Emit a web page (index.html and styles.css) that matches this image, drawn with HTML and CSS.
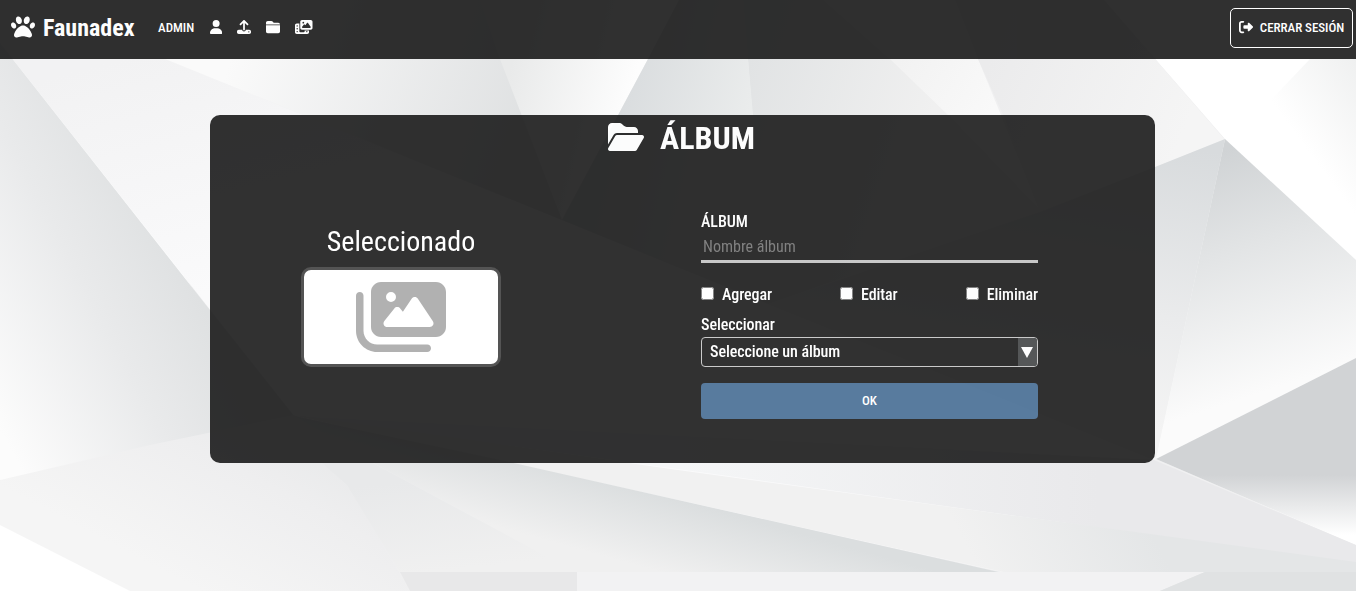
FILE: index.html
```html
<!DOCTYPE html>
<html lang="es">
<head>
<meta charset="utf-8">
<title>Faunadex - Álbum</title>
<link rel="stylesheet" href="styles.css">
</head>
<body>
<svg class="backdrop" viewBox="0 0 1356 591" preserveAspectRatio="none" aria-hidden="true">
  <defs>
    <linearGradient id="left" gradientUnits="userSpaceOnUse" x1="210" y1="320" x2="0" y2="430"><stop offset="0" stop-color="#dfe1e2"/><stop offset=".4" stop-color="#e9eaeb"/><stop offset="1" stop-color="#fcfcfc"/></linearGradient>
    <linearGradient id="a" gradientUnits="userSpaceOnUse" x1="120" y1="60" x2="180" y2="300"><stop offset="0" stop-color="#f2f2f3"/><stop offset="1" stop-color="#fafafb"/></linearGradient>
    <linearGradient id="b" gradientUnits="userSpaceOnUse" x1="230" y1="60" x2="550" y2="170"><stop offset="0" stop-color="#fafafa"/><stop offset="1" stop-color="#dcdedf"/></linearGradient>
    <linearGradient id="c" gradientUnits="userSpaceOnUse" x1="510" y1="70" x2="630" y2="100"><stop offset="0" stop-color="#e9eaea"/><stop offset="1" stop-color="#fdfdfd"/></linearGradient>
    <linearGradient id="d" gradientUnits="userSpaceOnUse" x1="630" y1="80" x2="750" y2="110"><stop offset="0" stop-color="#dadddf"/><stop offset="1" stop-color="#eaecec"/></linearGradient>
    <linearGradient id="e" gradientUnits="userSpaceOnUse" x1="750" y1="60" x2="930" y2="120"><stop offset="0" stop-color="#e1e3e4"/><stop offset="1" stop-color="#f0f0f0"/></linearGradient>
    <linearGradient id="f" gradientUnits="userSpaceOnUse" x1="900" y1="60" x2="990" y2="115"><stop offset="0" stop-color="#f2f2f2"/><stop offset="1" stop-color="#f9f9f9"/></linearGradient>
    <linearGradient id="g" gradientUnits="userSpaceOnUse" x1="990" y1="60" x2="1180" y2="140"><stop offset="0" stop-color="#ebebec"/><stop offset="1" stop-color="#f5f5f5"/></linearGradient>
    <linearGradient id="h" gradientUnits="userSpaceOnUse" x1="1200" y1="150" x2="1150" y2="430"><stop offset="0" stop-color="#d8dbdd"/><stop offset=".6" stop-color="#eaebec"/><stop offset="1" stop-color="#f4f4f4"/></linearGradient>
    <linearGradient id="i" gradientUnits="userSpaceOnUse" x1="1225" y1="150" x2="1300" y2="380"><stop offset="0" stop-color="#d0d3d5"/><stop offset=".4" stop-color="#e2e4e5"/><stop offset="1" stop-color="#fbfbfb"/></linearGradient>
    <linearGradient id="j" gradientUnits="userSpaceOnUse" x1="0" y1="475" x2="0" y2="535"><stop offset="0" stop-color="#d1d3d5"/><stop offset="1" stop-color="#fff"/></linearGradient>
    <linearGradient id="k" gradientUnits="userSpaceOnUse" x1="680" y1="0" x2="1100" y2="0"><stop offset="0" stop-color="#f5f6f7"/><stop offset="1" stop-color="#e9e9eb"/></linearGradient>
    <linearGradient id="l" gradientUnits="userSpaceOnUse" x1="1150" y1="530" x2="1000" y2="610"><stop offset="0" stop-color="#e4e6e7"/><stop offset="1" stop-color="#f1f1f1"/></linearGradient>
    <linearGradient id="m" gradientUnits="userSpaceOnUse" x1="680" y1="500" x2="660" y2="572"><stop offset="0" stop-color="#dbdedf"/><stop offset="1" stop-color="#f0f0f0"/></linearGradient>
    <linearGradient id="n" gradientUnits="userSpaceOnUse" x1="290" y1="420" x2="200" y2="591"><stop offset="0" stop-color="#e8e9ea"/><stop offset=".35" stop-color="#eeeeef"/><stop offset="1" stop-color="#f5f5f5"/></linearGradient>
    <linearGradient id="o" gradientUnits="userSpaceOnUse" x1="420" y1="480" x2="430" y2="572"><stop offset="0" stop-color="#e8e9ea"/><stop offset="1" stop-color="#f0f0f0"/></linearGradient>
    <linearGradient id="p" gradientUnits="userSpaceOnUse" x1="1285" y1="120" x2="1366" y2="60"><stop offset="0" stop-color="#fff"/><stop offset="1" stop-color="#eeefef"/></linearGradient>
  </defs>
  <rect width="1356" height="591" fill="#fff"/>
  <path fill="#f0f0f1" d="M0 0H1104L1225 139 1156 459 1356 545V591H400L294 440z"/>
  <path fill="url(#a)" d="M0 0H20L165 59 1154 460 1003 572 294 416 0 43z"/>
  <path fill="url(#b)" d="M20 0H500L562 220 165 59z"/>
  <path fill="url(#c)" d="M480 0H679L648 59 562 220 500 59z"/>
  <path fill="url(#f)" d="M800 0H955L978 59 1040 210 768 304z"/>
  <path fill="url(#e)" d="M743 0H823L890 59 948 115 1040 210 768 304z"/>
  <path fill="url(#d)" d="M679 0H743L748 59 753 115 768 304 562 220 648 59z"/>
  <path fill="url(#g)" d="M955 0H1104L1155 59 1225 140 1040 212 1003 115 978 59z"/>
  <path fill="url(#p)" d="M1356 59H1310L1250 122 1356 240z"/>
  <path fill="url(#h)" d="M1225 139L1155 167 1040 212 768 304 1156 460z"/>
  <path fill="url(#i)" d="M1225 139L1356 260V358L1156 459z"/>
  <path fill="url(#j)" d="M1156 459L1356 358V545z"/>
  <path fill="url(#k)" d="M294 416L1154 460 1356 545V563z"/>
  <path fill="url(#l)" d="M294 415L678 470 1356 562V591H1003V572z"/>
  <path fill="url(#m)" d="M294 416L505 461 678 500 1003 573H577L373 463z"/>
  <path fill="url(#left)" d="M0 43L202 300 294 416 150 446 0 480z"/>
  <path fill="url(#n)" d="M0 480L150 445 294 415 335 463 410 591H130L0 525z"/>
  <path fill="url(#o)" d="M294 416L373 463 577 573H400L347 485 322 463z"/>
  <path fill="#e8e8e9" d="M400 572H577V591H410z"/>
  <path fill="#f2f2f3" d="M577 572H1205L1160 591H577z"/>
  <path fill="#e0e2e3" d="M1205 572H1356V591H1160z"/>
</svg>

<header class="navbar">
  <a class="brand">
    <svg class="brand-icon" viewBox="0 0 512 512"><path d="M226.5 92.9c14.3 42.9-.3 86.2-32.6 96.8s-70.1-15.6-84.4-58.5s.3-86.2 32.6-96.8s70.1 15.6 84.4 58.5zM100.4 198.6c18.9 32.4 14.3 70.1-10.2 84.1s-59.7-.9-78.5-33.3S-2.7 179.3 21.8 165.3s59.7 .9 78.5 33.3zM69.2 401.2C121.6 259.9 214.7 224 256 224s134.4 35.9 186.8 177.2c3.6 9.7 5.2 20.1 5.2 30.5v1.6c0 25.8-20.9 46.7-46.7 46.7c-11.5 0-22.9-1.4-34-4.2l-88-22c-15.3-3.8-31.3-3.8-46.6 0l-88 22c-11.1 2.8-22.5 4.2-34 4.2C84.9 480 64 459.1 64 433.3v-1.6c0-10.4 1.6-20.8 5.2-30.5zM421.8 282.7c-24.5-14-29.1-51.7-10.2-84.1s54-47.3 78.5-33.3s29.1 51.7 10.2 84.1s-54 47.3-78.5 33.3zM310.1 189.7c-32.3-10.6-46.9-53.9-32.6-96.8s52.1-69.1 84.4-58.5s46.9 53.9 32.6 96.8s-52.1 69.1-84.4 58.5z"/></svg>
    <span class="brand-name">Faunadex</span>
  </a>
  <nav class="menu">
    <span class="role">ADMIN</span>
    <svg class="ico ico-user" viewBox="0 0 448 512"><path d="M224 256A128 128 0 1 0 224 0a128 128 0 1 0 0 256zm-45.7 48C79.8 304 0 383.8 0 482.3C0 498.7 13.3 512 29.7 512H418.3c16.4 0 29.7-13.3 29.7-29.7C448 383.8 368.2 304 269.7 304H178.3z"/></svg>
    <svg class="ico" viewBox="0 0 512 512"><path d="M288 109.3V352c0 17.7-14.3 32-32 32s-32-14.3-32-32V109.3l-73.4 73.4c-12.5 12.5-32.8 12.5-45.3 0s-12.5-32.8 0-45.3l128-128c12.5-12.5 32.8-12.5 45.3 0l128 128c12.5 12.5 12.5 32.8 0 45.3s-32.8 12.5-45.3 0L288 109.3zM64 352H192c0 35.3 28.7 64 64 64s64-28.7 64-64H448c35.3 0 64 28.7 64 64v32c0 35.3-28.7 64-64 64H64c-35.3 0-64-28.7-64-64V416c0-35.3 28.7-64 64-64zM432 456a24 24 0 1 0 0-48 24 24 0 1 0 0 48z"/></svg>
    <svg class="ico" viewBox="0 0 512 512"><path d="M448 480H64c-35.3 0-64-28.7-64-64V192H512V416c0 35.3-28.7 64-64 64zm64-320H0V96C0 60.7 28.7 32 64 32H192c20.1 0 39.1 9.5 51.2 25.6l19.2 25.6c6 8.1 15.5 12.8 25.6 12.8H448c35.3 0 64 28.7 64 64z"/></svg>
    <svg class="ico ico-film" viewBox="0 0 640 512"><path d="M256 0H576c35.3 0 64 28.7 64 64V288c0 35.3-28.7 64-64 64H256c-35.3 0-64-28.7-64-64V64c0-35.3 28.7-64 64-64zM476 106.7C471.5 100 464 96 456 96s-15.5 4-20 10.7l-56 84L362.7 169c-4.6-5.7-11.5-9-18.7-9s-14.2 3.3-18.7 9l-64 80c-5.8 7.2-6.9 17.1-2.9 25.4s12.4 13.6 21.6 13.6h80 48H552c8.9 0 17-4.9 21.2-12.7s3.7-17.3-1.2-24.6l-96-144zM336 96a32 32 0 1 0 -64 0 32 32 0 1 0 64 0zM64 128h96V384v32c0 17.7 14.3 32 32 32H320c17.7 0 32-14.3 32-32V384H512v64c0 35.3-28.7 64-64 64H64c-35.3 0-64-28.7-64-64V192c0-35.3 28.7-64 64-64zm8 64c-8.8 0-16 7.2-16 16v16c0 8.8 7.2 16 16 16H88c8.8 0 16-7.2 16-16V208c0-8.8-7.2-16-16-16H72zm0 104c-8.8 0-16 7.2-16 16v16c0 8.8 7.2 16 16 16H88c8.8 0 16-7.2 16-16V312c0-8.8-7.2-16-16-16H72zm0 104c-8.8 0-16 7.2-16 16v16c0 8.8 7.2 16 16 16H88c8.8 0 16-7.2 16-16V416c0-8.8-7.2-16-16-16H72zm336 16v16c0 8.8 7.2 16 16 16h16c8.8 0 16-7.2 16-16V416c0-8.8-7.2-16-16-16H424c-8.8 0-16 7.2-16 16z"/></svg>
  </nav>
  <button class="logout" type="button">
    <svg class="ico" viewBox="0 0 512 512"><path d="M377.9 105.9L500.7 228.7c7.2 7.2 11.3 17.1 11.3 27.3s-4.1 20.1-11.3 27.3L377.9 406.1c-6.4 6.4-15 9.9-24 9.9c-18.7 0-33.9-15.2-33.9-33.9l0-62.1-128 0c-17.7 0-32-14.3-32-32l0-64c0-17.7 14.3-32 32-32l128 0 0-62.1c0-18.7 15.2-33.9 33.9-33.9c9 0 17.6 3.6 24 9.9zM160 96L96 96c-17.7 0-32 14.3-32 32l0 256c0 17.7 14.3 32 32 32l64 0c17.7 0 32 14.3 32 32s-14.3 32-32 32l-64 0c-53 0-96-43-96-96L0 128C0 75 43 32 96 32l64 0c17.7 0 32 14.3 32 32s-14.3 32-32 32z"/></svg>
    <span>CERRAR SESIÓN</span>
  </button>
</header>

<main class="panel">
  <h1 class="title">
    <svg class="title-icon" viewBox="0 0 576 512"><path d="M88.7 223.8L0 375.8V96C0 60.7 28.7 32 64 32H181.5c17 0 33.3 6.7 45.3 18.7l26.5 26.5c12 12 28.3 18.7 45.3 18.7H416c35.3 0 64 28.7 64 64v32H144c-22.8 0-43.8 12.1-55.3 31.8zm27.6 16.1C122.1 230 132.6 224 144 224H544c11.5 0 22 6.1 27.7 16.1s5.7 22.2-.1 32.1l-112 192C453.9 474 443.4 480 432 480H32c-11.5 0-22-6.1-27.7-16.1s-5.7-22.2 .1-32.1l112-192z"/></svg>
    <span>ÁLBUM</span>
  </h1>
  <section class="selected">
    <h2 class="selected-title">Seleccionado</h2>
    <div class="preview">
      <svg class="preview-icon" viewBox="0 0 576 512"><path d="M160 32c-35.3 0-64 28.7-64 64V320c0 35.3 28.7 64 64 64H512c35.3 0 64-28.7 64-64V96c0-35.3-28.7-64-64-64H160zM396 138.7l96 144c4.9 7.4 5.4 16.8 1.2 24.6S480.9 320 472 320H328 280 200c-9.2 0-17.6-5.3-21.6-13.6s-2.9-18.2 2.9-25.4l64-80c4.6-5.7 11.4-9 18.7-9s14.2 3.3 18.7 9l17.3 21.6 56-84C360.5 132 368 128 376 128s15.5 4 20 10.7zM192 128a32 32 0 1 1 64 0 32 32 0 1 1 -64 0zM48 120c0-13.3-10.7-24-24-24S0 106.7 0 120V344c0 75.1 60.9 136 136 136H456c13.3 0 24-10.7 24-24s-10.7-24-24-24H136c-48.6 0-88-39.4-88-88V120z"/></svg>
    </div>
  </section>
  <form class="form">
    <label class="label" for="name">ÁLBUM</label>
    <input class="name" id="name" type="text" placeholder="Nombre álbum">
    <div class="checks">
      <label class="check"><input class="box" type="checkbox">Agregar</label>
      <label class="check"><input class="box" type="checkbox">Editar</label>
      <label class="check"><input class="box" type="checkbox">Eliminar</label>
    </div>
    <span class="label">Seleccionar</span>
    <div class="select">
      <span class="select-value">Seleccione un álbum</span>
      <span class="select-arrow"><svg class="arrow" viewBox="0 0 12 11"><path d="M0 0H12L6 11z"/></svg></span>
    </div>
    <button class="ok" type="button">OK</button>
  </form>
</main>
</body>
</html>
```
FILE: styles.css
```css
* { box-sizing: border-box; }

body {
  margin: 0;
  height: 591px;
  overflow: hidden;
  color: #fff;
  font-family: "Roboto Condensed", Roboto, sans-serif;
  font-stretch: 75%;
  font-size: 16px;
}

svg { display: block; fill: currentColor; }

.backdrop {
  position: absolute;
  inset: 0;
  z-index: -1;
  width: 100%;
  height: 100%;
}

.navbar {
  display: flex;
  align-items: center;
  height: 59px;
  padding: 0 3px 4px 11px;
  background: #1a1a1a;
  opacity: .9;
}

.brand { display: flex; align-items: center; gap: 8px; width: 147px; }
.brand-icon { width: 24px; height: 24px; margin: -1px 0 1px; }
.brand-name { font-size: 24px; font-weight: 700; }

.menu { display: flex; align-items: center; }
.role { width: 52px; font-size: 13px; font-weight: 500; }
.ico { width: 14px; height: 14px; margin: -1px 15px 1px 0; }
.ico-user { width: 12.25px; }
.ico-film { width: 17.5px; margin-right: 0; }

.logout {
  display: flex;
  align-items: center;
  justify-content: center;
  gap: 7px;
  width: 123px;
  height: 40px;
  margin-left: auto;
  padding: 0;
  border: 1px solid #fff;
  border-radius: 5px;
  background: none;
  color: #fff;
  font: inherit;
  font-size: 13px;
  font-weight: 500;
  letter-spacing: -.06px;
}
.logout .ico { margin-right: 0; }

.panel {
  display: grid;
  grid-template: 97px 1fr / 491px 337px;
  width: 945px;
  height: 348px;
  margin: 56px 0 0 210px;
  border-radius: 10px;
  background: #1a1a1a;
  opacity: .9;
}

.title {
  display: flex;
  grid-column: 1 / -1;
  align-items: flex-start;
  justify-content: center;
  gap: 16px;
  width: 943px;
  margin: 0;
  padding-top: 4px;
  font-size: 32px;
  font-weight: 700;
  line-height: 38px;
}
.title-icon { width: 36px; height: 32px; margin-top: 2px; }

.selected { width: 200px; margin-left: 91px; text-align: center; }
.selected-title { margin: 13px 0 9px; font-size: 28px; font-weight: 400; line-height: 33px; }

.preview {
  display: flex;
  align-items: center;
  justify-content: center;
  height: 100px;
  border: 3px solid #414141;
  border-radius: 10px;
  background: #fff;
  color: #a9a9a9;
}
.preview-icon { width: 90px; height: 80px; }

.form { display: flex; flex-direction: column; font-weight: 500; letter-spacing: -.08px; }
.label { line-height: 19px; }

.name {
  height: 32px;
  padding: 1px 2px 0;
  border: 0;
  border-bottom: 3px solid #c4c4c4;
  background: none;
  color: #fff;
  font: inherit;
  font-weight: 400;
}
.name::placeholder { color: #757575; }

.checks { display: flex; justify-content: space-between; margin: 22px 0 11px; line-height: 19px; }
.check { display: flex; align-items: center; gap: 8px; }
.box { width: 13px; height: 13px; margin: -1px 0 1px; }

.select {
  display: flex;
  height: 30px;
  margin-top: 3px;
  border: 1px solid #c4c4c4;
  border-radius: 4px;
  line-height: 27px;
  overflow: hidden;
}
.select-value { flex: 1; padding-left: 8px; }
.select-arrow { display: flex; align-items: center; justify-content: flex-start; width: 19px; padding-left: 3px; background: #434647; }
.arrow { width: 12px; height: 11px; }

.ok {
  height: 36px;
  margin-top: 16px;
  padding: 0 0 2px;
  border: 0;
  border-radius: 4px;
  background: #466c94;
  color: #fff;
  font: inherit;
  font-size: 13px;
}
```
